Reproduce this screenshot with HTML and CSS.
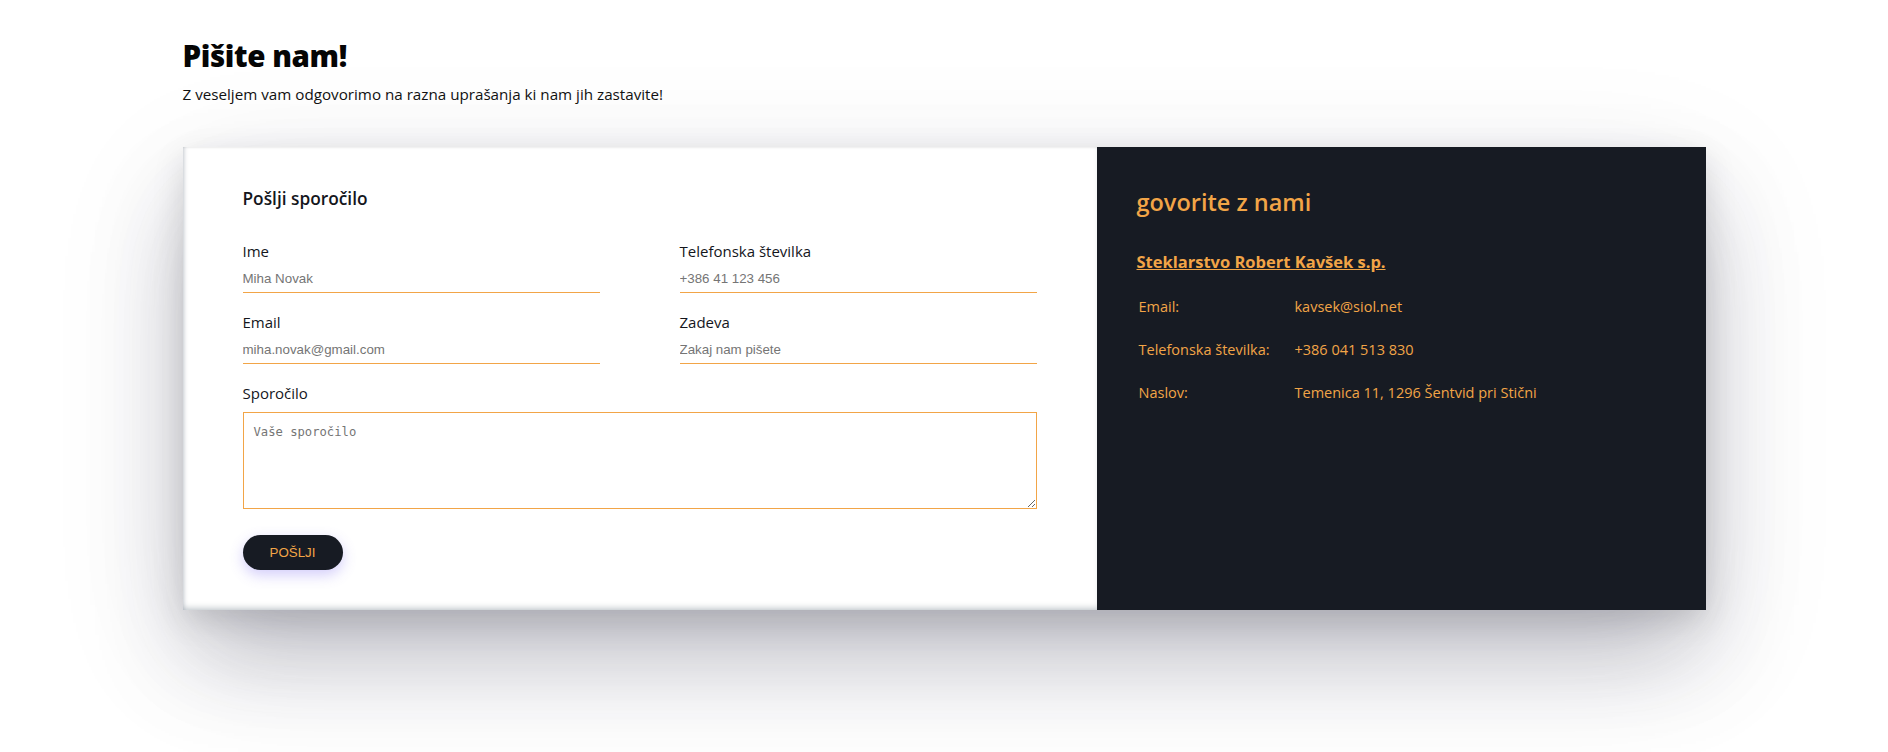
FILE: index.html
```html
<!DOCTYPE html>
<html lang="sl">
<head>
<meta charset="utf-8">
<title>Pišite nam!</title>
<link rel="stylesheet" href="styles.css">
</head>
<body>
<div class="page">
  <header class="intro">
    <h1 class="intro-title">Pišite nam!</h1>
    <p class="intro-text">Z veseljem vam odgovorimo na razna uprašanja ki nam jih zastavite!</p>
  </header>

  <section class="card">
    <form class="form">
      <h2 class="form-title">Pošlji sporočilo</h2>
      <div class="fields">
        <label class="field">
          <span class="field-label">Ime</span>
          <input class="field-input" type="text" placeholder="Miha Novak">
        </label>
        <label class="field">
          <span class="field-label">Telefonska številka</span>
          <input class="field-input" type="text" placeholder="+386 41 123 456">
        </label>
        <label class="field">
          <span class="field-label">Email</span>
          <input class="field-input" type="text" placeholder="miha.novak@gmail.com">
        </label>
        <label class="field">
          <span class="field-label">Zadeva</span>
          <input class="field-input" type="text" placeholder="Zakaj nam pišete">
        </label>
      </div>
      <label class="field field-message">
        <span class="field-label">Sporočilo</span>
        <textarea class="field-textarea" placeholder="Vaše sporočilo"></textarea>
      </label>
      <button class="send" type="button">POŠLJI</button>
    </form>

    <aside class="info">
      <h2 class="info-title">govorite z nami</h2>
      <a class="info-company" href="#">Steklarstvo Robert Kavšek s.p.</a>
      <div class="info-list">
        <span class="info-key">Email:</span><span class="info-value">kavsek@siol.net</span>
        <span class="info-key">Telefonska številka:</span><span class="info-value">+386 041 513 830</span>
        <span class="info-key">Naslov:</span><span class="info-value">Temenica 11, 1296 Šentvid pri Stični</span>
      </div>
    </aside>
  </section>
</div>
</body>
</html>
```

FILE: styles.css
```css
* { box-sizing: border-box; }

html, body {
  min-height: 100%;
}

body {
  margin: 0;
  background: #ffffff;
  font-family: "Open Sans", "Noto Sans", sans-serif;
  color: #14161c;
}

.page {
  width: 1523px;
  margin: 0 auto;
  padding: 33px 0 144px;
}

.intro-title {
  margin: 0;
  font-size: 29.5px;
  line-height: 45px;
  font-weight: 800;
  color: #050505;
  letter-spacing: -0.4px;
}

.intro-text {
  margin: 6px 0 0;
  font-size: 15.2px;
  line-height: 21px;
  color: #111;
}

.card {
  margin-top: 42px;
  display: grid;
  grid-template-columns: 914px 609px;
  box-shadow: 0 50px 90px -10px rgba(40, 40, 65, 0.27), 0 10px 30px rgba(0, 0, 0, 0.12), 0 40px 130px rgba(30, 30, 60, 0.1);
}

.form {
  background: #fff;
  padding: 38px 60px 40px;
  display: flex;
  flex-direction: column;
  align-items: flex-start;
  box-shadow: inset 0 -5px 6px -3px rgba(90, 105, 120, 0.35), inset 4px 0 4px -3px rgba(90, 100, 120, 0.3), inset 0 3px 3px -3px rgba(0, 0, 0, 0.12);
}

.form-title {
  margin: 0;
  font-size: 17.3px;
  line-height: 27px;
  font-weight: 600;
  color: #14161c;
}

.fields {
  margin-top: 29px;
  width: 100%;
  display: grid;
  grid-template-columns: 357px 357px;
  column-gap: 80px;
  row-gap: 19px;
}

.field {
  display: flex;
  flex-direction: column;
}

.field-label {
  font-size: 15px;
  line-height: 21px;
  color: #14161c;
}

.field-input {
  margin-top: 3px;
  height: 28px;
  width: 100%;
  padding: 0;
  border: 0;
  border-bottom: 1px solid #f2a547;
  outline: none;
  font-family: "Liberation Sans", Arial, sans-serif;
  font-size: 13.33px;
  color: #333;
  background: transparent;
}

.field-input::placeholder,
.field-textarea::placeholder {
  color: #757575;
}

.field-message {
  margin-top: 19px;
  width: 100%;
}

.field-textarea {
  display: block;
  margin-top: 8px;
  width: 100%;
  height: 97px;
  padding: 10px;
  border: 1px solid #f2a547;
  outline: none;
  font-family: "DejaVu Sans Mono", "Liberation Mono", monospace;
  font-size: 12.2px;
  line-height: 18px;
  color: #333;
}

.send {
  margin-top: 26px;
  width: 100px;
  height: 35px;
  border: 0;
  border-radius: 18px;
  background: #171b23;
  color: #f2a547;
  font-family: "Liberation Sans", Arial, sans-serif;
  font-size: 13.33px;
  padding: 0;
  box-shadow: 0 5px 14px rgba(110, 90, 240, 0.3);
  cursor: pointer;
}

.info {
  background: #171b23;
  padding: 37px 40px;
  color: #f2a547;
  display: flex;
  flex-direction: column;
  align-items: flex-start;
}

.info-title {
  margin: 0;
  font-size: 23.5px;
  line-height: 36px;
  font-weight: 600;
  color: #f2a547;
}

.info-company {
  margin-top: 30px;
  font-size: 16.5px;
  line-height: 24px;
  font-weight: 700;
  color: #f2a547;
  text-decoration: underline;
}

.info-list {
  margin: 11px 0 0 2px;
  display: grid;
  grid-template-columns: 156px auto;
  font-size: 14.5px;
  line-height: 43px;
}
```
